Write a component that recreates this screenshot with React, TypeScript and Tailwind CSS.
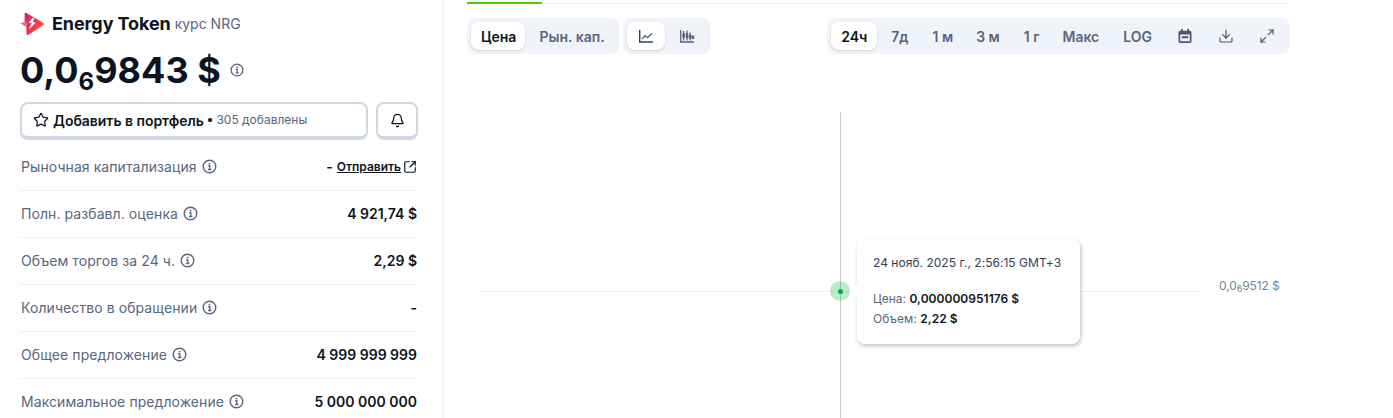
import React from "react";
import { Star, Bell, SquareArrowOutUpRight, Download, Maximize2 } from "lucide-react";

const Info = ({ size = 15, cls = "text-[#58667e]" }: { size?: number; cls?: string }) => (
  <svg width={size} height={size} viewBox="0 0 16 16" fill="none" className={`shrink-0 ${cls}`}>
    <circle cx="8" cy="8" r="6.7" stroke="currentColor" strokeWidth="1.5" />
    <circle cx="8" cy="4.9" r="1" fill="currentColor" />
    <path d="M6.6 7.2H8.3V11M6.4 11.2H10" stroke="currentColor" strokeWidth="1.4" />
  </svg>
);

const Logo = () => (
  <svg width="24" height="24" viewBox="0 0 24 24" className="shrink-0">
    <defs>
      <linearGradient id="lg" x1="0.1" y1="0" x2="1" y2="0.75">
        <stop offset="0" stopColor="#d4247f" />
        <stop offset="0.5" stopColor="#ee2f55" />
        <stop offset="1" stopColor="#f76a2a" />
      </linearGradient>
    </defs>
    <path d="M4.6 2Q4.6 0.2 6.4 1.1L23.2 10.7Q24.6 12 23.2 13.3L8.6 22.8Q6.6 23.8 6.5 21.8L6.3 14L4.6 10Z" fill="url(#lg)" />
    <path d="M12.6 6L8.4 10.8L11.8 11L9 16.6L9.6 16.8L16 10.4L12.8 10.2L14.4 6.2Z" fill="#fff" />
    <path d="M0 11.2L7.2 9.6L6 11.6L8.2 11.8L5.8 14.6Z" fill="#f8667f" />
  </svg>
);

const rows: [string, React.ReactNode][] = [
  ["Рыночная капитализация", null],
  ["Полн. разбавл. оценка", "4 921,74 $"],
  ["Объем торгов за 24 ч.", "2,29 $"],
  ["Количество в обращении", "-"],
  ["Общее предложение", "4 999 999 999"],
  ["Максимальное предложение", "5 000 000 000"],
];

const ranges = [
  ["24ч", "px-[10px]"],
  ["7д", "px-[10px]"],
  ["1 м", "pl-[10px] pr-[9px]"],
  ["3 м", "px-[10px]"],
  ["1 г", "pl-[10px] pr-[9px]"],
  ["Макс", "px-[10px]"],
  ["LOG", "px-[10px]"],
];

export default function App() {
  return (
    <div className="flex h-[418px] w-[1393px] overflow-hidden bg-white font-['Inter','Liberation_Sans',sans-serif] text-[#0d1421]">
      <aside className="w-[443px] shrink-0 border-r border-[#eff2f5] pl-5 pr-[24px]">
        <div className="mt-[12px] flex h-[24px] items-center">
          <Logo />
          <span className="ml-[8px] text-[18px] font-bold leading-6 tracking-[-0.1px]">Energy Token</span>
          <span className="ml-[4px] text-[14px] leading-6 text-[#58667e]">курс NRG</span>
        </div>
        <div className="mt-[10px] flex h-[48px] items-center">
          <span className="text-[36px] font-bold leading-[48px] tracking-[0.03px]">
            0,0<sub className="relative -bottom-[7px] align-baseline text-[24px] leading-none">6</sub>9843 $
          </span>
          <span className="-mt-[1px] ml-[9px]">
            <Info size={14} />
          </span>
        </div>
        <div className="mt-[8px] flex gap-[8px]">
          <button className="flex h-[38px] w-[348px] items-center rounded-lg border-2 border-b-[4px] border-[#cfd6e4] bg-white pl-[11px]">
            <Star size={16} strokeWidth={1.8} className="mr-[4px] text-[#0d1421]" />
            <span className="text-[14px] font-semibold tracking-[-0.03px]">Добавить в портфель</span>
            <span className="mx-[3px] text-[13px] font-semibold">•</span>
            <span className="text-[12px] text-[#58667e]">305 добавлены</span>
          </button>
          <button className="flex h-[38px] w-[42px] items-center justify-center rounded-lg border-2 border-b-[4px] border-[#cfd6e4] bg-white">
            <Bell size={15} strokeWidth={2} />
          </button>
        </div>
        <div className="mt-[4px]">
          {rows.map(([label, val], i) => (
            <div key={label} className="flex h-[47px] items-center justify-between border-b border-[#eff2f5] pb-[1px] pl-px pr-px last:border-b-0 last:pb-[3px]">
              <span className="flex items-center gap-[5px] text-[14px] tracking-[0.08px] text-[#58667e]">
                {label}
                <Info />
              </span>
              {i === 0 ? (
                <span className="flex items-center text-[12px] font-semibold">
                  <span className="mr-[4px] text-[14px]">-</span>
                  <span className="underline">Отправить</span>
                  <SquareArrowOutUpRight size={14} strokeWidth={2} className="ml-[2px]" />
                </span>
              ) : (
                <span className="text-[14px] font-semibold">{val}</span>
              )}
            </div>
          ))}
        </div>
      </aside>
      <main className="relative w-[847px] pl-[24px]">
        <div className="mt-[3px] h-px w-[823px] bg-[#eff2f5]">
          <div className="relative -top-[1px] h-[2px] w-[75px] bg-[#4bcc00]" />
        </div>
        <div className="mt-[14px] flex w-[823px] items-center">
          <div className="flex h-[36px] items-center gap-1 rounded-lg bg-[#f0f3f9] px-1">
            <span className="flex h-[28px] items-center rounded-lg bg-white pl-[10px] pr-[9px] text-[14px] font-semibold shadow-sm">Цена</span>
            <span className="flex h-[28px] items-center px-[10px] text-[14px] font-semibold text-[#58667e]">Рын. кап.</span>
          </div>
          <div className="ml-1 flex h-[36px] items-center gap-1 rounded-lg bg-[#f0f3f9] px-1">
            <span className="flex h-[28px] w-[38px] items-center justify-center rounded-lg bg-white shadow-sm">
              <svg width="16" height="16" viewBox="0 0 16 16" fill="none" stroke="#323f52" strokeWidth="1.4">
                <path d="M1.7 2V14H15" />
                <path d="M4 11L7 7.8L9.5 9.6L14 5.4" stroke="#58667e" />
              </svg>
            </span>
            <span className="flex h-[28px] w-[37px] items-center justify-center">
              <svg width="16" height="16" viewBox="0 0 16 16" fill="none" stroke="#58667e" strokeWidth="1.3">
                <path d="M1.7 2V14H15" />
                <path d="M4.6 3V12.5M8 2.5V12.5M11.2 4.5V12.5" />
                <path d="M4.6 5.5V9.5M8 5V10M11.2 7V10.5M14 7.5V11" strokeWidth="2.6" />
              </svg>
            </span>
          </div>
          <div className="ml-auto flex h-[36px] items-center gap-1 rounded-lg bg-[#f0f3f9] pl-1 pr-[5px]">
            {ranges.map(([r, p], i) => (
              <span key={r} className={`flex h-[28px] items-center rounded-lg ${p} text-[14px] font-semibold ${i === 0 ? "bg-white text-[#0d1421] shadow-sm" : "text-[#58667e]"}`}>
                {r}
              </span>
            ))}
            <span className="flex w-[37px] justify-center">
              <svg width="16" height="16" viewBox="0 0 16 16" fill="#4a5872">
                <path d="M4 1h1.8v1.8h4.4V1H12v1.8h.8a1.7 1.7 0 0 1 1.7 1.7v8.8a1.7 1.7 0 0 1-1.7 1.7H3.2a1.7 1.7 0 0 1-1.7-1.7V4.5a1.7 1.7 0 0 1 1.7-1.7H4zM3.2 6.4v6.9h9.6V6.4zm1.6 1.8h6.4v2H4.8z" fillRule="evenodd" />
              </svg>
            </span>
            <span className="flex w-[37px] justify-center text-[#4a5872]">
              <Download size={16} strokeWidth={1.8} />
            </span>
            <span className="flex w-[37px] justify-center text-[#4a5872]">
              <Maximize2 size={16} strokeWidth={1.8} />
            </span>
          </div>
        </div>

        <div className="absolute left-[397px] top-[112px] h-[306px] w-px bg-[#c6c9ce]" />
        <div className="absolute left-[34px] top-[291px] h-px w-[726px] bg-[#eff2f5]" />
        <div className="absolute left-[387px] top-[281px] flex h-[20px] w-[20px] items-center justify-center rounded-full bg-[rgba(22,184,80,0.3)]">
          <div className="h-[5px] w-[5px] rounded-full bg-[#0aa544]" />
        </div>
        <div className="absolute left-[414px] top-[239px] h-[105px] w-[223px] rounded-lg bg-white px-[16px] pt-[14px] text-[12px] leading-[20px] tracking-[0.03px] text-[#58667e] shadow-[1px_2px_4px_rgba(88,102,126,0.4)]">
          <div className="absolute -left-[5px] top-[47px] h-[10px] w-[10px] rotate-45 bg-white" />
          <div className="relative text-[#323f52]">24 нояб. 2025 г., 2:56:15 GMT+3</div>
          <div className="relative mt-[16px]">
            Цена: <b className="font-semibold text-[#0d1421]">0,000000951176 $</b>
          </div>
          <div className="relative">
            Объем: <b className="font-semibold text-[#0d1421]">2,22 $</b>
          </div>
        </div>
        <div className="absolute left-[776px] top-[278px] text-[12px] leading-[16px] tracking-[-0.1px] text-[#7386a0]">
          0,0<sub className="relative bottom-[-2px] align-baseline text-[9px] leading-none">6</sub>9512 $
        </div>
      </main>
    </div>
  );
}
